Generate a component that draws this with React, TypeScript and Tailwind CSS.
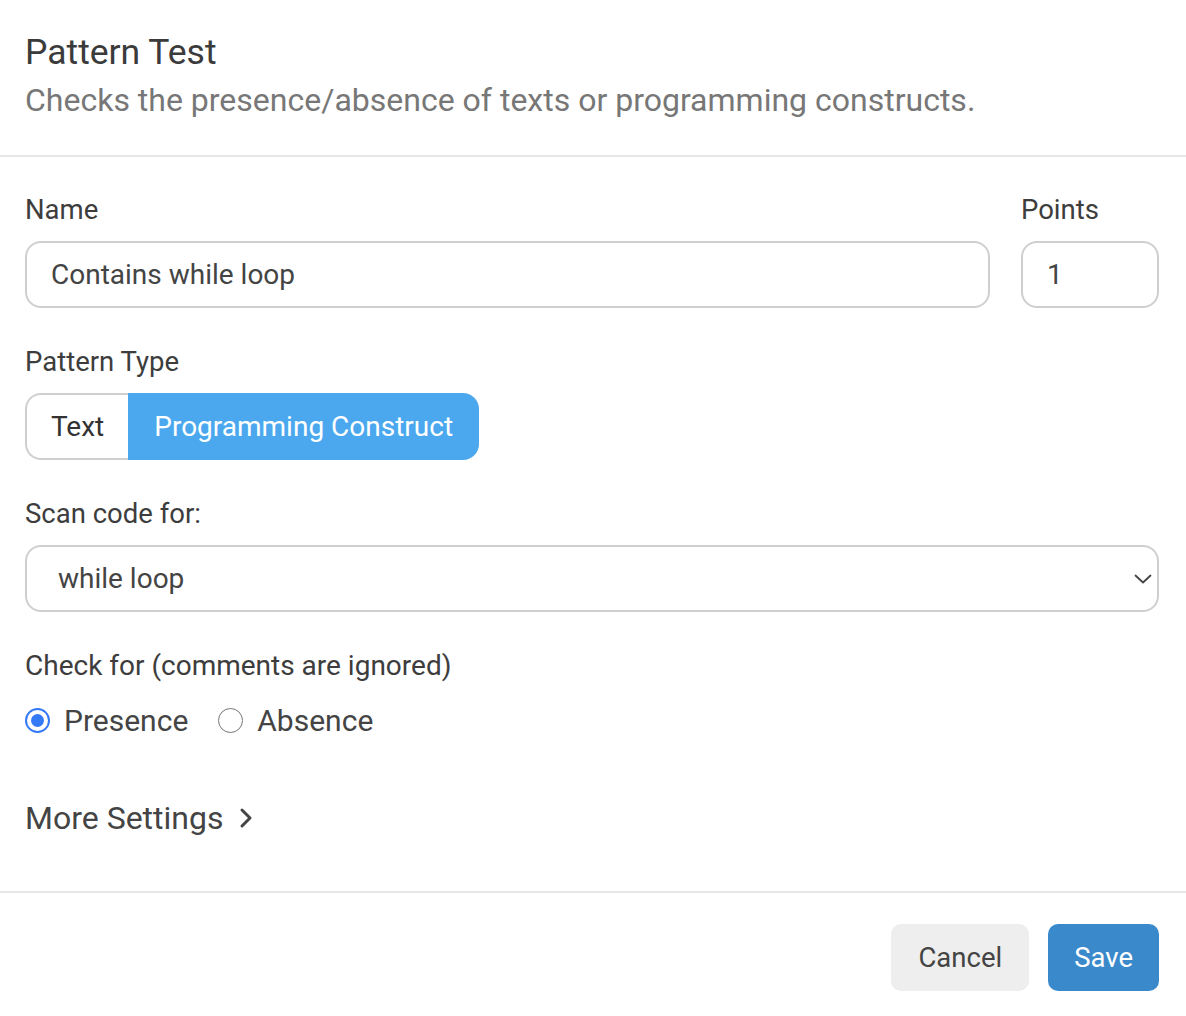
import React, { useState } from 'react';

const ChevronDown = () => (
  <svg width="18" height="12" viewBox="0 0 18 12" fill="none">
    <path d="M1.5 2.5L9 9.5L16.5 2.5" stroke="#444" strokeWidth="1.8" strokeLinecap="round" strokeLinejoin="round" />
  </svg>
);

const ChevronRight = () => (
  <svg width="16" height="22" viewBox="0 0 16 22" fill="none">
    <path d="M4 3L12 11L4 19" stroke="#444" strokeWidth="3" strokeLinecap="round" strokeLinejoin="round" />
  </svg>
);

const Radio = ({ checked, label, onClick }: { checked: boolean; label: string; onClick: () => void }) => (
  <button type="button" onClick={onClick} className="flex items-center h-[32px]">
    {checked ? (
      <span className="w-[25px] h-[25px] rounded-full border-[2.5px] border-[#3479f5] flex items-center justify-center">
        <span className="w-[13px] h-[13px] rounded-full bg-[#3479f5]" />
      </span>
    ) : (
      <span className="w-[25px] h-[25px] rounded-full border-[1.5px] border-[#767676]" />
    )}
    <span className="ml-[14px] text-[30px] text-[#444]">{label}</span>
  </button>
);

const App = () => {
  const [type, setType] = useState<'text' | 'construct'>('construct');
  const [check, setCheck] = useState<'presence' | 'absence'>('presence');

  return (
    <div className="w-[1186px] h-[1016px] bg-white text-[#3d3d3d]" style={{ fontFamily: 'Roboto, "Liberation Sans", sans-serif' }}>
      {/* Header */}
      <div className="px-[25px] pt-[30px] pb-[33px] border-b-2 border-[#e6e6e6]">
        <h1 className="text-[35.5px] leading-[44px] text-[#3b3b3b]">Pattern Test</h1>
        <p className="mt-[4px] text-[32px] leading-[44px] text-[#777]">
          Checks the presence/absence of texts or programming constructs.
        </p>
      </div>

      {/* Body */}
      <div className="pl-[25px] pr-[27px] pt-[37px] pb-[55px] border-b-2 border-[#e6e6e6]">
        <div className="flex gap-[31px]">
          <div className="flex-1">
            <label className="block text-[27.5px] leading-[32px] mb-[15px]">Name</label>
            <input
              defaultValue="Contains while loop"
              className="w-full h-[67px] px-[24px] text-[28px] text-[#444] border-2 border-[#cfcfcf] rounded-[16px] outline-none"
            />
          </div>
          <div className="w-[138px]">
            <label className="block text-[27.5px] leading-[32px] mb-[15px]">Points</label>
            <input
              defaultValue="1"
              className="w-full h-[67px] px-[24px] text-[28px] text-[#444] border-2 border-[#cfcfcf] rounded-[16px] outline-none"
            />
          </div>
        </div>

        <label className="block mt-[38px] text-[27.5px] leading-[32px] mb-[15px]">Pattern Type</label>
        <div className="flex">
          <button
            type="button"
            onClick={() => setType('text')}
            className={
              type === 'text'
                ? 'h-[67px] px-[26px] text-[28px] rounded-l-[16px] bg-[#4ba8ee] text-white'
                : 'h-[67px] px-[24px] text-[28px] rounded-l-[16px] border-2 border-r-0 border-[#cfcfcf] text-[#333]'
            }
          >
            Text
          </button>
          <button
            type="button"
            onClick={() => setType('construct')}
            className={
              type === 'construct'
                ? 'h-[67px] px-[26px] text-[28px] rounded-r-[16px] bg-[#4ba8ee] text-white'
                : 'h-[67px] px-[24px] text-[28px] rounded-r-[16px] border-2 border-l-0 border-[#cfcfcf] text-[#333]'
            }
          >
            Programming Construct
          </button>
        </div>

        <label className="block mt-[38px] text-[27.5px] leading-[32px] mb-[15px]">Scan code for:</label>
        <div className="h-[67px] flex items-center justify-between pl-[31px] pr-[5px] border-2 border-[#cfcfcf] rounded-[16px]">
          <span className="text-[28px] text-[#444]">while loop</span>
          <ChevronDown />
        </div>

        <label className="block mt-[38px] text-[28px] leading-[32px]">Check for (comments are ignored)</label>
        <div className="flex items-center gap-[30px] mt-[22px]">
          <Radio checked={check === 'presence'} label="Presence" onClick={() => setCheck('presence')} />
          <Radio checked={check === 'absence'} label="Absence" onClick={() => setCheck('absence')} />
        </div>

        <button type="button" className="mt-[64px] flex items-center h-[36px] text-[32px] text-[#444]">
          More Settings
          <span className="ml-[15px] flex items-center">
            <ChevronRight />
          </span>
        </button>
      </div>

      {/* Footer */}
      <div className="flex justify-end gap-[19px] pt-[31px] pr-[27px]">
        <button type="button" className="h-[67px] px-[27px] text-[27.5px] text-[#444] bg-[#eeeeee] rounded-[10px]">
          Cancel
        </button>
        <button type="button" className="h-[67px] px-[26px] text-[27.5px] text-white bg-[#3a89cb] rounded-[10px]">
          Save
        </button>
      </div>
    </div>
  );
};

export default App;
